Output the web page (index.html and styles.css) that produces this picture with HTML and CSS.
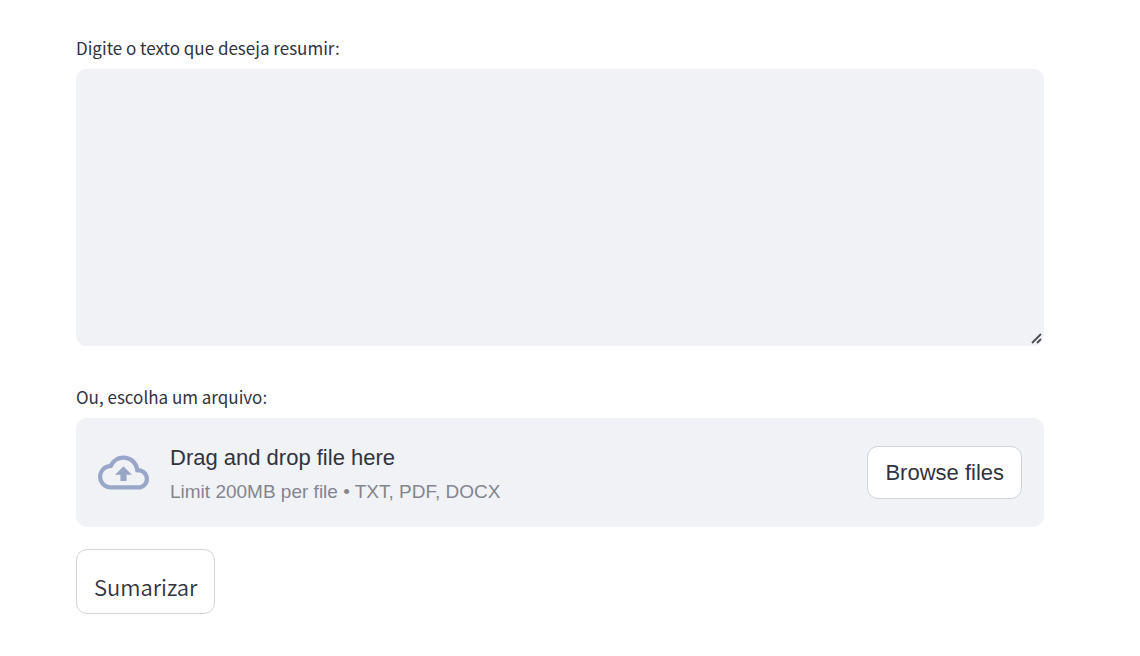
FILE: index.html
```html
<!DOCTYPE html>
<html lang="pt-BR">
<head>
<meta charset="utf-8">
<meta name="viewport" content="width=device-width, initial-scale=1">
<title>Sumarizar</title>
<link rel="stylesheet" href="styles.css">
</head>
<body>
<main class="page">
  <form class="form">
    <div class="field">
      <label class="label" for="source-text">Digite o texto que deseja resumir:</label>
      <div class="text-wrap">
        <textarea class="textarea" id="source-text"></textarea>
        <svg class="grip" viewBox="0 0 11 11" aria-hidden="true"><path d="M1 10L10 1M6 10l4-4"/></svg>
      </div>
    </div>
    <div class="field">
      <label class="label" for="browse">Ou, escolha um arquivo:</label>
      <section class="dropzone">
        <svg class="cloud" viewBox="0 0 24 24" aria-hidden="true"><path d="M19.35 10.04A7.49 7.49 0 0 0 12 4C9.11 4 6.6 5.64 5.35 8.04A5.994 5.994 0 0 0 0 14c0 3.31 2.69 6 6 6h13c2.76 0 5-2.24 5-5 0-2.64-2.05-4.78-4.65-4.96zM19 18H6c-2.21 0-4-1.79-4-4 0-2.05 1.53-3.76 3.56-3.97l1.07-.11.5-.95A5.469 5.469 0 0 1 12 6c2.62 0 4.88 1.86 5.39 4.43l.3 1.5 1.53.11A2.98 2.98 0 0 1 22 15c0 1.65-1.35 3-3 3zM8 13h2.55v3h2.9v-3H16l-4-4z"/></svg>
        <div class="hint">
          <span class="hint-title">Drag and drop file here</span>
          <span class="hint-limit">Limit 200MB per file • TXT, PDF, DOCX</span>
        </div>
        <button class="button" id="browse" type="button">Browse files</button>
      </section>
    </div>
    <button class="button submit" type="button">Sumarizar</button>
  </form>
</main>
</body>
</html>
```
FILE: styles.css
```css
* {
  box-sizing: border-box;
}

body {
  margin: 0;
  background: #fff;
  color: #31333f;
  font-family: "Noto Sans CJK SC", "Noto Sans", sans-serif;
}

.page {
  padding: 36px 96px 40px 76px;
}

.form,
.field {
  display: flex;
  flex-direction: column;
}

.field {
  gap: 10px;
  margin-bottom: 39px;
}

.field:nth-child(2) {
  margin-bottom: 22px;
}

.label {
  font-size: 17px;
  line-height: 23px;
}

.text-wrap {
  position: relative;
  display: flex;
}

.textarea {
  width: 100%;
  height: 277px;
  padding: 16px;
  border: 0;
  border-radius: 11px;
  outline: 0;
  background: #f0f2f6;
  color: inherit;
  font: inherit;
  resize: vertical;
}

.textarea::-webkit-resizer {
  background: transparent;
}

.grip {
  position: absolute;
  right: 2px;
  bottom: 2px;
  width: 11px;
  height: 11px;
  fill: none;
  stroke: #4a4b55;
  stroke-width: 1.8;
  pointer-events: none;
}

.dropzone {
  display: flex;
  align-items: center;
  padding: 22px;
  border-radius: 11px;
  background: #f0f2f6;
  font-family: "Liberation Sans", Arial, sans-serif;
}

.cloud {
  flex: none;
  width: 51px;
  height: 51px;
  margin-right: 21px;
  fill: #98a7c7;
}

.hint {
  display: flex;
  flex: 1;
  flex-direction: column;
  gap: 3px;
}

.hint-title {
  font-size: 22px;
  line-height: 36px;
}

.hint-limit {
  color: #84858d;
  font-size: 19px;
  line-height: 26px;
}

.button {
  padding: 8px 17px;
  border: 1px solid #d3d4d9;
  border-radius: 11px;
  background: #fff;
  color: inherit;
  font-family: inherit;
  font-size: 22px;
  line-height: 35px;
}

.submit {
  align-self: flex-start;
  padding: 19px 17px 9px;
  font-weight: 350;
}
```
